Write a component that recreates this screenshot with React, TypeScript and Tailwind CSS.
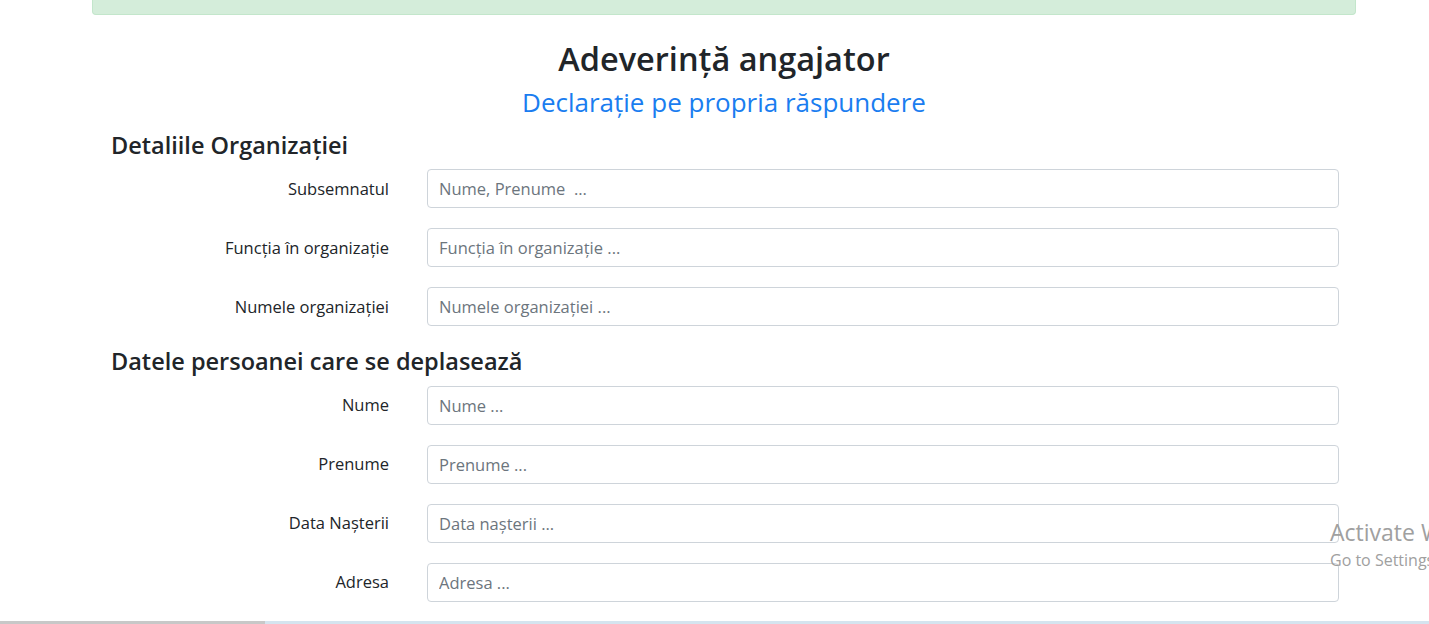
const font = { fontFamily: '"Open Sans", "Noto Sans", sans-serif' };

const orgFields = [
  { label: 'Subsemnatul', placeholder: 'Nume, Prenume  ...' },
  { label: 'Funcția în organizație', placeholder: 'Funcția în organizație ...' },
  { label: 'Numele organizației', placeholder: 'Numele organizației ...' },
];

const personFields = [
  { label: 'Nume', placeholder: 'Nume ...' },
  { label: 'Prenume', placeholder: 'Prenume ...' },
  { label: 'Data Nașterii', placeholder: 'Data nașterii ...' },
  { label: 'Adresa', placeholder: 'Adresa ...' },
];

function Field({ label, placeholder }: { label: string; placeholder: string }) {
  return (
    <div className="flex items-center gap-[38px]">
      <label className="w-[278px] shrink-0 text-right text-[16.5px] text-[#212529]">{label}</label>
      <input
        className="h-[39px] flex-1 rounded-[4px] border border-[#ced4da] bg-white px-[11px] text-[16.5px] text-[#495057] outline-none placeholder:text-[#6c757d]"
        placeholder={placeholder}
      />
    </div>
  );
}

export default function App() {
  return (
    <div className="relative h-[624px] overflow-hidden bg-white text-[#212529]" style={font}>
      <div className="ml-[92px] w-[1264px]">
        <div className="h-[15px] rounded-b-[4px] border border-t-0 border-[#c3e6cb] bg-[#d4edda]" />
        <div className="mt-[24px] text-center">
          <h2 className="text-[32.5px] font-semibold leading-[1.2]">Adeverință angajator</h2>
          <h3 className="mt-[9px] text-[26px] leading-[1.2] text-[#1a7df0]">Declarație pe propria răspundere</h3>
        </div>
        <div className="pl-[19px] pr-[17px]">
          <h4 className="mt-[13px] text-[23.5px] font-semibold leading-[1.2]">Detaliile Organizației</h4>
          <div className="mt-[10px] flex flex-col gap-[20px]">
            {orgFields.map((f) => (
              <Field key={f.label} {...f} />
            ))}
          </div>
          <h4 className="mt-[21px] text-[23.5px] font-semibold leading-[1.2]">Datele persoanei care se deplasează</h4>
          <div className="mt-[10px] flex flex-col gap-[20px]">
            {personFields.map((f) => (
              <Field key={f.label} {...f} />
            ))}
          </div>
        </div>
      </div>

      <div className="pointer-events-none absolute left-[1330px] top-[517px] whitespace-nowrap text-[#a0a0a0]">
        <div className="text-[23px] leading-[30px]">Activate Windows</div>
        <div className="text-[16px] leading-[27px]">Go to Settings to activate Windows.</div>
      </div>

      <div className="absolute bottom-0 left-0 flex h-[3px] w-full">
        <div className="w-[265px] bg-[#c8c8c8]" />
        <div className="flex-1 bg-[#d5e4ef]" />
      </div>
    </div>
  );
}
